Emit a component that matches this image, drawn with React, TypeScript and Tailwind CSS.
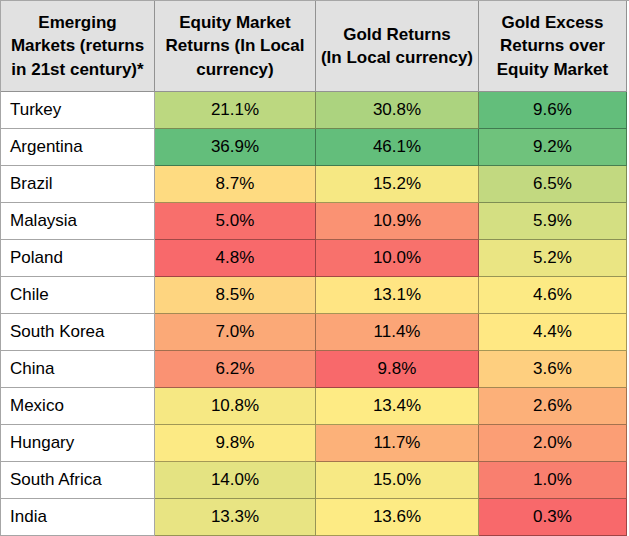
import React from "react";

type Row = { country: string; equity: number; gold: number; excess: number };

const rows: Row[] = [
  { country: "Turkey", equity: 21.1, gold: 30.8, excess: 9.6 },
  { country: "Argentina", equity: 36.9, gold: 46.1, excess: 9.2 },
  { country: "Brazil", equity: 8.7, gold: 15.2, excess: 6.5 },
  { country: "Malaysia", equity: 5.0, gold: 10.9, excess: 5.9 },
  { country: "Poland", equity: 4.8, gold: 10.0, excess: 5.2 },
  { country: "Chile", equity: 8.5, gold: 13.1, excess: 4.6 },
  { country: "South Korea", equity: 7.0, gold: 11.4, excess: 4.4 },
  { country: "China", equity: 6.2, gold: 9.8, excess: 3.6 },
  { country: "Mexico", equity: 10.8, gold: 13.4, excess: 2.6 },
  { country: "Hungary", equity: 9.8, gold: 11.7, excess: 2.0 },
  { country: "South Africa", equity: 14.0, gold: 15.0, excess: 1.0 },
  { country: "India", equity: 13.3, gold: 13.6, excess: 0.3 },
];

// excel style 3-colour scale: red -> yellow (median) -> green
const RED = [248, 105, 107];
const YELLOW = [255, 235, 132];
const GREEN = [99, 190, 123];

function mix(a: number[], b: number[], t: number) {
  const c = a.map((v, i) => Math.round(v + (b[i] - v) * t));
  return `rgb(${c[0]}, ${c[1]}, ${c[2]})`;
}

function scale(values: number[]) {
  const sorted = [...values].sort((a, b) => a - b);
  const min = sorted[0];
  const max = sorted[sorted.length - 1];
  const n = sorted.length;
  const mid = n % 2 ? sorted[(n - 1) / 2] : (sorted[n / 2 - 1] + sorted[n / 2]) / 2;
  return (v: number) =>
    v <= mid
      ? mix(RED, YELLOW, (v - min) / (mid - min))
      : mix(YELLOW, GREEN, (v - mid) / (max - mid));
}

const equityColor = scale(rows.map((r) => r.equity));
const goldColor = scale(rows.map((r) => r.gold));
const excessColor = scale(rows.map((r) => r.excess));

const headers = [
  ["Emerging", "Markets (returns", "in 21st century)*"],
  ["Equity Market", "Returns (In Local", "currency)"],
  ["Gold Returns", "(In Local currency)"],
  ["Gold Excess", "Returns over", "Equity Market"],
];

const cell = "h-[37px] border-r border-b border-black/35 flex items-center text-[17px]";

export default function App() {
  return (
    <div className="w-[629px] h-[536px] bg-white text-black font-['Liberation_Sans',Arial,sans-serif]">
      <div className="grid grid-cols-[154px_161px_163px_148px] border-t border-l border-black/35">
        {headers.map((lines, i) => (
          <div
            key={i}
            className="h-[91px] bg-[#e1e1e1] border-r border-b border-black/35 flex flex-col items-center justify-center text-center font-bold text-[17px] leading-[23.5px]"
          >
            {lines.map((l) => (
              <span key={l}>{l}</span>
            ))}
          </div>
        ))}
        {rows.map((r) => (
          <React.Fragment key={r.country}>
            <div className={`${cell} pl-[9px]`}>{r.country}</div>
            <div className={`${cell} justify-center`} style={{ backgroundColor: equityColor(r.equity) }}>
              {r.equity.toFixed(1)}%
            </div>
            <div className={`${cell} justify-center`} style={{ backgroundColor: goldColor(r.gold) }}>
              {r.gold.toFixed(1)}%
            </div>
            <div className={`${cell} justify-center`} style={{ backgroundColor: excessColor(r.excess) }}>
              {r.excess.toFixed(1)}%
            </div>
          </React.Fragment>
        ))}
      </div>
    </div>
  );
}
